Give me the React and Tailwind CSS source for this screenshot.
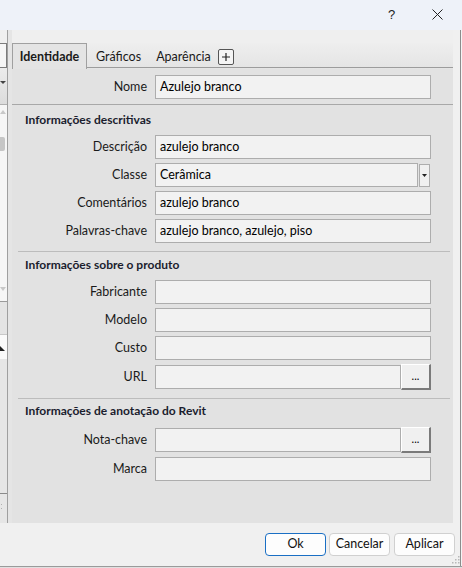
import React from "react";

function Label({ children }) {
  return <div className="w-[136px] shrink-0 text-right pr-[1px] text-[#1a1a1a]">{children}</div>;
}

function Input({ value, w = "w-[276px]" }) {
  return (
    <div className={`${w} h-[24px] border border-[#adadad] bg-[#f2f2f2] pl-[4px] flex items-center text-[#000] leading-none whitespace-nowrap overflow-hidden`}>
      {value}
    </div>
  );
}

function DotsButton() {
  return (
    <div className="w-[30px] h-[26px] -my-[1px] bg-[#f0f0f0] border-t border-l border-t-[#ffffff] border-l-[#ffffff] border-r-2 border-b-2 border-r-[#7a7a7a] border-b-[#7a7a7a] flex items-center justify-center text-[11px] text-[#000] leading-none pb-[2px]">
      ...
    </div>
  );
}

function Row({ label, children, className = "" }) {
  return (
    <div className={`flex items-center h-[24px] ${className}`}>
      <Label>{label}</Label>
      <div className="ml-[7px] flex items-center">{children}</div>
    </div>
  );
}

function Heading({ children, className = "" }) {
  return (
    <div className={`h-[16px] leading-[16px] pl-[13px] font-bold text-[12px] text-[#1b1d2e] ${className}`}>{children}</div>
  );
}

function LeftStrip() {
  return (
    <div className="flex flex-row w-[12px] shrink-0 h-full">
      <div className="w-[7px] flex flex-col h-full">
        <div className="h-[13px] bg-[#efefef]" />
        <div className="h-[25px] bg-[#f6f6f6] border-t border-b border-r border-[#7c7c7c]" />
        <div className="h-[36px] bg-gradient-to-b from-[#ececec] to-[#dcdcdc] flex items-start pt-[13px]">
          <svg width="6" height="4" viewBox="0 0 6 4"><path d="M0 0 L6 0 L3 3 Z" fill="#444" /></svg>
        </div>
        <div className="h-[1px] bg-[#b0b0b0]" />
        <div className="h-[196px] bg-[#f6f6f6] relative">
          <svg className="absolute left-[0px] top-[5px]" width="6" height="4" viewBox="0 0 6 4"><path d="M0 4 L6 4 L3 0 Z" fill="#c8c8c8" /></svg>
          <div className="absolute left-0 top-[32px] w-[5px] h-[14px] bg-[#c6c6c6] rounded-r-[2px]" />
          <svg className="absolute left-[0px] top-[182px]" width="6" height="4" viewBox="0 0 6 4"><path d="M0 0 L6 0 L3 4 Z" fill="#c8c8c8" /></svg>
        </div>
        <div className="h-[1px] bg-[#9a9a9a]" />
        <div className="h-[32px] bg-[#e4e4e4]" />
        <div className="h-[25px] bg-[#fafafa] relative border-t border-[#c8c8c8]">
          <svg className="absolute left-[0px] top-[11px]" width="5" height="5" viewBox="0 0 5 5"><path d="M0 0 L0 5 L5 5 Z" fill="#222" /></svg>
        </div>
        <div className="h-[134px] bg-[#e6e6e6]" />
        <div className="h-[1px] bg-[#8a8a8a]" />
        <div className="flex-1 bg-[#e6e6e6] relative">
          <div className="absolute left-[1px] top-[10px] w-[1px] h-[1px] bg-[#b0b0b0]" />
          <div className="absolute left-[1px] top-[14px] w-[1px] h-[1px] bg-[#b0b0b0]" />
        </div>
      </div>
      <div className="w-[1px] bg-[#9f9f9f] h-full" />
      <div className="w-[4px] bg-[#e5e5e5] h-full" />
    </div>
  );
}

export default function App() {
  return (
    <div className="w-[462px] h-[568px] overflow-hidden bg-[#f0f0f0] flex flex-col font-['Lato',sans-serif] text-[12.5px] text-[#1a1a1a] relative">
      {/* Title bar */}
      <div className="h-[30px] shrink-0 flex flex-row">
        <div className="flex-1 bg-[#eef2f9] relative">
          <div className="absolute left-[388px] top-[5px] text-[13px] text-[#222] font-['Liberation_Sans',sans-serif]">?</div>
          <svg className="absolute left-[432px] top-[9px]" width="11" height="11" viewBox="0 0 11 11">
            <path d="M0.5 0.5 L10.5 10.5 M10.5 0.5 L0.5 10.5" stroke="#222" strokeWidth="1" />
          </svg>
        </div>
        <div className="w-[7px] bg-[#eef2f9]" />
      </div>

      {/* Body */}
      <div className="h-[493px] shrink-0 flex flex-row">
        <LeftStrip />
        {/* Main panel */}
        <div className="w-[441px] shrink-0 flex flex-col h-full">
          <div className="h-[13px] bg-[#efefef]" />
          <div className="h-[26px] flex flex-row items-end bg-gradient-to-b from-[#eeeeee] to-[#e4e4e4] relative">
            <div className="absolute left-0 right-0 bottom-[1px] h-[1px] bg-[#9c9c9c]" />
            <div className="relative z-10 w-[75px] h-[26px] bg-[#e4e4e4] border-l border-t border-r border-[#a0a0a0] flex items-center justify-center font-bold text-[#1a1a1a] pt-[2px]">
              Identidade
            </div>
            <div className="h-[25px] flex items-center pl-[9px] pt-[1px] text-[#1a1a1a]">Gráficos</div>
            <div className="h-[25px] flex items-center pl-[15px] pt-[1px] text-[#1a1a1a]">Aparência</div>
            <div className="ml-[7px] mb-[4px] w-[16px] h-[16px] border border-[#555] rounded-[2px] bg-[#f4f4f4] flex items-center justify-center">
              <svg width="10" height="10" viewBox="0 0 10 10"><path d="M5 1 V9 M1 5 H9" stroke="#222" strokeWidth="1.2" /></svg>
            </div>
          </div>
          <div className="flex-1 bg-[#e2e2e2] flex flex-col">
            <Row label="Nome" className="mt-[6px]">
              <Input value="Azulejo branco" />
            </Row>
            <div className="mt-[5px] h-[1px] bg-[#a8a8a8]" />

            <Heading className="mt-[7px]">Informações descritivas</Heading>
            <div className="mt-[7px] flex flex-col gap-[4px]">
              <Row label="Descrição"><Input value="azulejo branco" /></Row>
              <Row label="Classe">
                <Input value="Cerâmica" w="w-[263px]" />
                <div className="ml-[1px] w-[11px] h-[23px] border border-[#adadad] bg-[#f0f0f0] flex items-center justify-center">
                  <svg width="5" height="3" viewBox="0 0 5 3"><path d="M0 0 L5 0 L2.5 3 Z" fill="#222" /></svg>
                </div>
              </Row>
              <Row label="Comentários"><Input value="azulejo branco" /></Row>
              <Row label="Palavras-chave"><Input value="azulejo branco, azulejo, piso" /></Row>
            </div>
            <div className="mt-[8px] mx-[6px] mr-[3px] h-[1px] bg-[#bcbcbc]" />

            <Heading className="mt-[5px]">Informações sobre o produto</Heading>
            <div className="mt-[7px] flex flex-col gap-[4px]">
              <Row label="Fabricante"><Input value="" /></Row>
              <Row label="Modelo"><Input value="" /></Row>
              <Row label="Custo"><Input value="" /></Row>
              <Row label="URL" className="mt-[1px]">
                <Input value="" w="w-[246px]" />
                <DotsButton />
              </Row>
            </div>
            <div className="mt-[9px] mx-[6px] mr-[3px] h-[1px] bg-[#bcbcbc]" />

            <Heading className="mt-[4px]">Informações de anotação do Revit</Heading>
            <div className="mt-[9px] flex flex-col gap-[5px]">
              <Row label="Nota-chave">
                <Input value="" w="w-[246px]" />
                <DotsButton />
              </Row>
              <Row label="Marca"><Input value="" /></Row>
            </div>
          </div>
        </div>
        {/* Right strip */}
        <div className="w-[7px] shrink-0 bg-[#f0f0f0] h-full" />
        <div className="w-[1px] shrink-0 bg-[#8c8c8c] h-full" />
        <div className="w-[1px] shrink-0 bg-[#f4f4f4] h-full" />
      </div>

      {/* Footer */}
      <div className="h-[43px] shrink-0 flex flex-row relative">
        <div className="flex-1 bg-[#f0f0f0] flex flex-row items-start pt-[10px]">
          <div className="ml-[265px] w-[61px] h-[23px] rounded-[4px] border border-[#1a6fc4] bg-[#fdfdfd] flex items-center justify-center text-[#111]">Ok</div>
          <div className="ml-[3px] w-[61px] h-[23px] rounded-[4px] border border-[#d0d0d0] bg-[#fdfdfd] flex items-center justify-center text-[#111]">Cancelar</div>
          <div className="ml-[4px] w-[61px] h-[23px] rounded-[4px] border border-[#d0d0d0] bg-[#fdfdfd] flex items-center justify-center text-[#111]">Aplicar</div>
        </div>
        <div className="w-[1px] bg-[#8c8c8c]" />
        <div className="w-[1px] bg-[#f4f4f4]" />
        <svg className="absolute left-[451px] top-[32px]" width="9" height="9" viewBox="0 0 9 9">
          <rect x="7" y="1" width="1.5" height="1.5" fill="#b8b8b8" />
          <rect x="4" y="4" width="1.5" height="1.5" fill="#b8b8b8" />
          <rect x="7" y="4" width="1.5" height="1.5" fill="#b8b8b8" />
          <rect x="1" y="7" width="1.5" height="1.5" fill="#b8b8b8" />
          <rect x="4" y="7" width="1.5" height="1.5" fill="#b8b8b8" />
          <rect x="7" y="7" width="1.5" height="1.5" fill="#b8b8b8" />
        </svg>
      </div>
      <div className="h-[1px] shrink-0 bg-[#9a9a9a]" />
      <div className="h-[1px] shrink-0 bg-[#e0e0e0]" />
    </div>
  );
}
